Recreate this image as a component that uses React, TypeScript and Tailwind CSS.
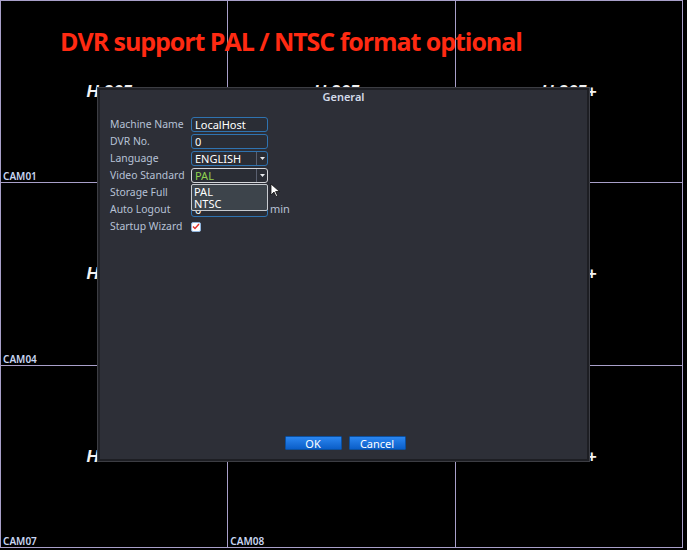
// DVR "General" settings screen over the 3x3 camera live view.

const LINE = 'border-[#a89fc9]'

const cells = [
  { label: 'CAM01' },
  { label: '' },
  { label: '' },
  { label: 'CAM04' },
  { label: '' },
  { label: '' },
  { label: 'CAM07' },
  { label: 'CAM08' },
  { label: '' },
]

function Field({ value, select, focus, green }: { value: string; select?: boolean; focus?: boolean; green?: boolean }) {
  return (
    <div
      className={`relative flex h-[15px] w-[77px] items-center rounded-[3px] border bg-[#2a2d35] pl-[3px] ${
        focus ? 'border-[#d4d6da]' : 'border-[#2f73b0]'
      }`}
    >
      <span className={`flex-1 leading-none ${green ? 'text-[#8fd14f]' : 'text-white'}`}>{value}</span>
      {select && (
        <div className="flex h-full w-[11px] items-center justify-center border-l border-[#5a6070]">
          <svg width="5" height="3" viewBox="0 0 5 3">
            <path d="M0 0h5L2.5 3z" fill="#e8eaee" />
          </svg>
        </div>
      )}
    </div>
  )
}

function Row({ label, children }: { label: string; children?: React.ReactNode }) {
  return (
    <div className="flex h-[17px] items-center">
      <span className="w-[81px] shrink-0 text-[10.4px] text-[#b7c2d6]">{label}</span>
      {children}
    </div>
  )
}

export default function App() {
  return (
    <div className="relative h-[550px] w-[687px] overflow-hidden bg-black [font-family:'Noto_Sans',sans-serif]">
      <div className={`grid h-[548px] w-[683px] grid-cols-3 grid-rows-3 border-l border-t ${LINE}`}>
        {cells.map((c, i) => (
          <div key={i} className={`relative flex items-center justify-center border-b border-r ${LINE}`}>
            <span className="text-[17px] font-bold italic leading-none text-[#f2f2f2] [font-family:'Liberation_Sans',sans-serif]">
              H.265+
            </span>
            {c.label && (
              <span className="absolute bottom-[1px] left-[2px] text-[10px] font-semibold leading-none text-[#c9d6f2]">
                {c.label}
              </span>
            )}
          </div>
        ))}
      </div>

      <div className="absolute left-[60px] top-[29px] text-[25px] font-bold leading-none tracking-[-1.05px] text-[#ff2a12] [font-family:'Open_Sans',sans-serif]">
        DVR support PAL / NTSC format optional
      </div>

      {/* settings dialog */}
      <div className="absolute left-[97px] top-[87px] flex h-[375px] w-[493px] flex-col border border-[#3c3d43] bg-[#1d1e23] p-[2px]">
        <div className="flex flex-1 flex-col bg-[#2d2f37] text-[11px]">
          <div className="flex h-[14px] items-center justify-center font-semibold text-[#d3dbea]">General</div>

          <div className="mt-[12px] flex flex-col pl-[10px]">
            <Row label="Machine Name">
              <Field value="LocalHost" />
            </Row>
            <Row label="DVR No.">
              <Field value="0" />
            </Row>
            <Row label="Language">
              <Field value="ENGLISH" select />
            </Row>
            <Row label="Video Standard">
              <div className="relative z-10">
                <Field value="PAL" select focus green />
                <div className="absolute left-0 top-[16px] flex h-[27px] w-[77px] flex-col justify-center rounded-[2px] border border-[#c8cbd0] bg-[#3d444b] pl-[2px] leading-[12px] text-white">
                  <span>PAL</span>
                  <span>NTSC</span>
                </div>
                <svg className="absolute left-[79px] top-[15px]" width="10" height="15" viewBox="0 0 10 15">
                  <path d="M1 1v11l3-3 2 4.5 1.6-.7-2-4.3H9.5z" fill="#fff" stroke="#111" strokeWidth="0.8" />
                </svg>
              </div>
            </Row>
            <Row label="Storage Full">
              <Field value="" />
            </Row>
            <Row label="Auto Logout">
              <Field value="0" />
              <span className="ml-[2px] text-[#b7c2d6]">min</span>
            </Row>
            <Row label="Startup Wizard">
              <div className="flex h-[10px] w-[10px] items-center justify-center rounded-[2px] border border-[#8fb4dc] bg-white">
                <svg width="8" height="7" viewBox="0 0 8 7">
                  <path d="M1 3.5 3 5.5 7 1" fill="none" stroke="#e0302a" strokeWidth="1.4" />
                </svg>
              </div>
            </Row>
          </div>

          <div className="flex-1" />

          <div className="flex justify-center gap-[7px] pb-[9px] pl-[3px]">
            <button className="h-[14px] w-[57px] rounded-[1px] border border-[#0b4f9e] bg-gradient-to-b from-[#2a86f0] to-[#0a5ec8] text-[11px] leading-none text-white">
              OK
            </button>
            <button className="h-[14px] w-[57px] rounded-[1px] border border-[#0b4f9e] bg-gradient-to-b from-[#2a86f0] to-[#0a5ec8] text-[11px] leading-none text-white">
              Cancel
            </button>
          </div>
        </div>
      </div>
    </div>
  )
}
